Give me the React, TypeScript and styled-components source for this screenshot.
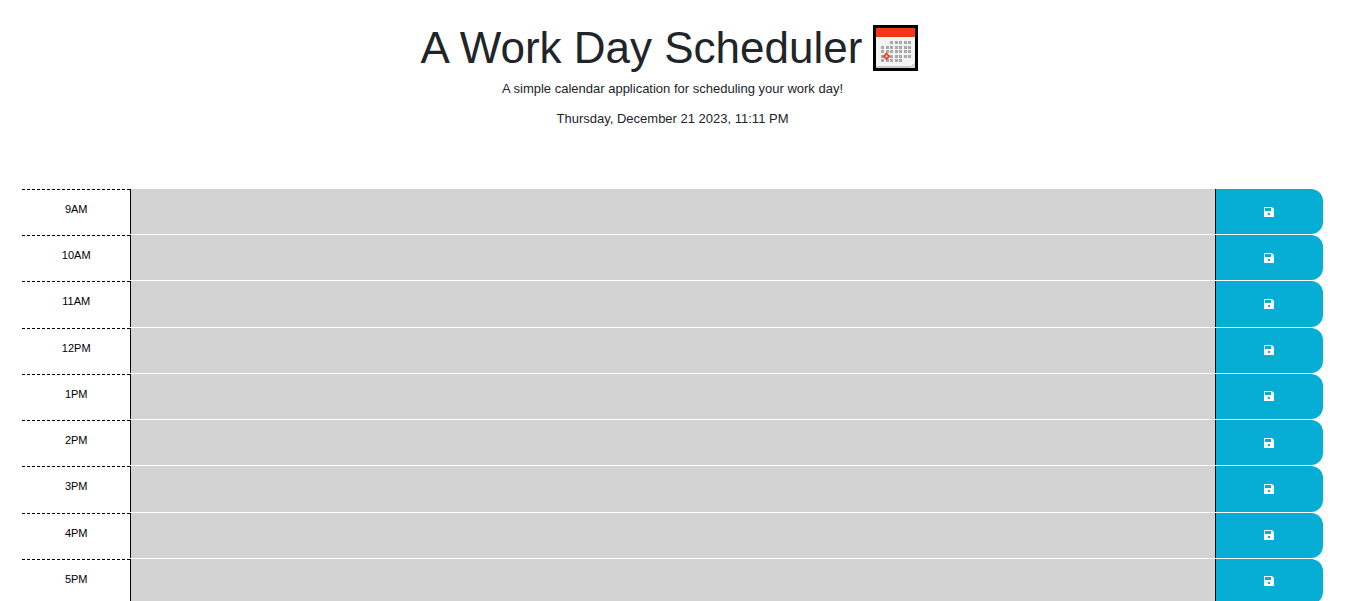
import React from "react";
import styled, { createGlobalStyle } from "styled-components";

const GlobalStyle = createGlobalStyle`
  *, *::before, *::after { box-sizing: border-box; }
  body {
    margin: 0;
    background: #fff;
    color: #212529;
    font-family: "Liberation Sans", Arial, sans-serif;
    font-size: 13px;
    line-height: 20px;
  }
`;

const Header = styled.header`
  display: flex;
  flex-direction: column;
  align-items: center;
  padding: 21px 22px 50px;
  text-align: center;
`;

const Title = styled.h1`
  display: flex;
  align-items: center;
  gap: 11px;
  margin: 0 0 4px;
  padding-right: 6px;
  font-size: 44px;
  font-weight: 400;
  line-height: 54px;
`;

const Text = styled.p`
  margin: 0 0 10px;
`;

const Schedule = styled.main`
  display: grid;
  grid-template-rows: repeat(9, 1fr);
  min-height: 416px;
  padding: 0 22px;
`;

const Row = styled.form`
  display: grid;
  grid-template-columns: 1fr 10fr 1fr;
  border-bottom: 1px solid #fff;
`;

const Hour = styled.label`
  padding: 9px 0;
  border-top: 1px dashed #000;
  color: #000;
  font-size: 11px;
  text-align: center;
`;

const Entry = styled.textarea`
  display: block;
  width: 100%;
  height: 100%;
  min-height: 0;
  padding: 8px;
  border: 0;
  border-left: 1px solid #000;
  background: #d3d3d3;
  color: #000;
  font: inherit;
  resize: none;
`;

const SaveButton = styled.button`
  display: flex;
  align-items: center;
  justify-content: center;
  padding: 0;
  border: 0;
  border-left: 1px solid #000;
  border-radius: 0 12px 12px 0;
  background: #06aed5;
  color: #fff;
  cursor: pointer;
`;

const hours = ["9AM", "10AM", "11AM", "12PM", "1PM", "2PM", "3PM", "4PM", "5PM"];

const dayRows = [
  { y: 16, from: 4, to: 8 },
  { y: 21, from: 2, to: 8 },
  { y: 25, from: 2, to: 8 },
  { y: 30, from: 2, to: 8 },
  { y: 34, from: 2, to: 6 },
];

function CalendarIcon() {
  return (
    <svg width="45" height="46" viewBox="0 0 45 46" aria-hidden="true" shapeRendering="crispEdges">
      <rect width="45" height="46" fill="#000" />
      <rect x="3" y="3" width="39" height="40" fill="#f3f3f3" />
      <rect x="3" y="3" width="39" height="9" fill="#f03a17" />
      <rect x="3" y="41" width="39" height="2" fill="#c8c8c8" />
      {dayRows.map(({ y, from, to }) =>
        Array.from({ length: to - from + 1 }, (_, i) => (
          <rect key={`${y}-${i}`} x={(from + i) * 9 / 2 - 1} y={y} width="3" height="3" fill="#a9a9a9" />
        ))
      )}
      <path
        d="M13.5 28.5l2.8 2.8-2.8 2.8-2.8-2.8z"
        fill="#eeb0a4"
        stroke="#d9442b"
        strokeWidth="1.6"
        shapeRendering="auto"
      />
      <path d="M37 43v-2l5-4v6z" fill="#d4d4d4" shapeRendering="auto" />
      <path d="M37 41v-4h5z" fill="#fff" shapeRendering="auto" />
    </svg>
  );
}

function SaveIcon() {
  return (
    <svg width="10" height="10" viewBox="0 0 10 10" aria-hidden="true">
      <path
        fill="currentColor"
        fillRule="evenodd"
        d="M0 0h8l2 2v8H0zM1 1v3h6V1zM4 6v2h2V6z"
      />
    </svg>
  );
}

export default function App() {
  return (
    <>
      <GlobalStyle />
      <Header>
        <Title>
          A Work Day Scheduler
          <CalendarIcon />
        </Title>
        <Text>A simple calendar application for scheduling your work day!</Text>
        <Text>Thursday, December 21 2023, 11:11 PM</Text>
      </Header>
      <Schedule>
        {hours.map((hour) => (
          <Row key={hour} onSubmit={(event) => event.preventDefault()}>
            <Hour htmlFor={`entry-${hour}`}>{hour}</Hour>
            <Entry id={`entry-${hour}`} rows={1} />
            <SaveButton type="submit" aria-label={`Save ${hour}`}>
              <SaveIcon />
            </SaveButton>
          </Row>
        ))}
      </Schedule>
    </>
  );
}
